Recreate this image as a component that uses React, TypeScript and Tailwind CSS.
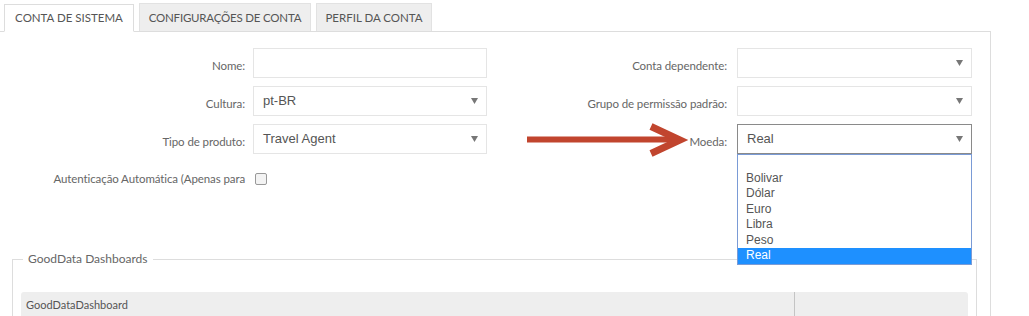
import React from 'react';

const labelFont = "font-['Lato',sans-serif]";
const inputFont = "font-['Liberation_Sans',Arial,sans-serif]";

function Caret() {
  return (
    <svg width="7" height="6" viewBox="0 0 7 6" className="shrink-0">
      <path d="M0 0 H7 L3.5 6 Z" fill="#777" />
    </svg>
  );
}

function Field({
  label,
  value,
  select,
  labelWidth,
  gap,
  width,
  active,
  children,
}: {
  label: string;
  value?: string;
  select?: boolean;
  labelWidth: string;
  gap: string;
  width: string;
  active?: boolean;
  children?: React.ReactNode;
}) {
  return (
    <div className={`flex items-center h-[30px] ${gap}`}>
      <div className={`${labelWidth} text-right text-[11.5px] tracking-[-0.1px] text-[#666] pt-[5px] ${labelFont}`}>
        {label}
      </div>
      <div className={`relative ${width} h-[30px]`}>
        <div
          className={`flex items-center justify-between h-full pl-[9px] pr-[8px] bg-white border ${
            active ? 'border-[#8a8a8a]' : 'border-[#e5e5e5]'
          } text-[13px] text-[#555] ${inputFont}`}
        >
          <span>{value}</span>
          {select && <Caret />}
        </div>
        {children}
      </div>
    </div>
  );
}

const moedas = ['', 'Bolivar', 'Dólar', 'Euro', 'Libra', 'Peso', 'Real'];

export default function App() {
  return (
    <div className="relative w-[1029px] h-[316px] overflow-hidden bg-white">
      {/* Tabs */}
      <div className={`flex items-end gap-[5px] w-[991px] h-[32px] pl-[4px] border-b border-[#ddd] ${labelFont}`}>
        <div className="w-[130px] h-[28px] flex items-center justify-center bg-white border border-[#ddd] border-b-white -mb-px text-[11.5px] text-[#555]">
          CONTA DE SISTEMA
        </div>
        <div className="w-[172px] h-[28px] flex items-center justify-center bg-[#eee] border border-[#e2e2e2] border-b-0 text-[11.5px] tracking-[-0.2px] text-[#555]">
          CONFIGURAÇÕES DE CONTA
        </div>
        <div className="w-[116px] h-[28px] flex items-center justify-center bg-[#eee] border border-[#e2e2e2] border-b-0 text-[11.5px] text-[#555]">
          PERFIL DA CONTA
        </div>
      </div>

      {/* Panel */}
      <div className="w-[991px] h-[284px] border-r border-[#ddd] pt-[16px]">
        <div className="flex">
          <div className="flex flex-col gap-[8px] w-[487px]">
            <Field label="Nome:" labelWidth="w-[245px]" gap="gap-[8px]" width="w-[234px]" />
            <Field label="Cultura:" value="pt-BR" select labelWidth="w-[245px]" gap="gap-[8px]" width="w-[234px]" />
            <Field label="Tipo de produto:" value="Travel Agent" select labelWidth="w-[245px]" gap="gap-[8px]" width="w-[234px]" />
          </div>
          <div className="flex flex-col gap-[8px]">
            <Field label="Conta dependente:" select labelWidth="w-[240px]" gap="gap-[10px]" width="w-[235px]" />
            <Field label="Grupo de permissão padrão:" select labelWidth="w-[240px]" gap="gap-[10px]" width="w-[235px]" />
            <Field label="Moeda:" value="Real" select active labelWidth="w-[240px]" gap="gap-[10px]" width="w-[235px]">
              <div className={`absolute left-0 top-full w-[235px] z-20 bg-white border border-[#7a9bd6] text-[12px] ${inputFont}`}>
                {moedas.map((m, i) => (
                  <div
                    key={i}
                    className={`h-[15.5px] leading-[15.5px] pl-[8px] ${
                      m === 'Real' ? 'bg-[#1e90ff] text-white' : 'text-[#555]'
                    }`}
                  >
                    {m}
                  </div>
                ))}
              </div>
            </Field>
          </div>
        </div>

        {/* Checkbox row */}
        <div className="flex items-center h-[18px] mt-[16px] gap-[10px]">
          <div className={`w-[245px] text-right text-[11.5px] tracking-[-0.1px] text-[#666] whitespace-nowrap ${labelFont}`}>
            Autenticação Automática (Apenas para
          </div>
          <div className="w-[12px] h-[12px] rounded-[2px] border border-[#999] bg-[#f3f3f3]" />
        </div>

        {/* GoodData Dashboards */}
        <fieldset className="mt-[62px] ml-[12px] w-[965px] h-[120px] border border-[#ddd] px-[8px]">
          <legend className={`ml-[2px] px-[5px] text-[12px] leading-[18px] text-[#666] ${labelFont}`}>
            GoodData Dashboards
          </legend>
          <div className="mt-[24px] flex h-[40px] bg-[#eee] rounded-t-[3px]">
            <div className={`w-[774px] border-r border-[#c4c4c4] pl-[5px] pt-[5px] text-[11px] text-[#555] ${labelFont}`}>
              GoodDataDashboard
            </div>
            <div className="flex-1" />
          </div>
        </fieldset>
      </div>

      {/* Annotation arrow */}
      <svg className="absolute left-0 top-0 pointer-events-none z-10" width="1029" height="316">
        <line x1="527" y1="139.5" x2="677" y2="139.5" stroke="#c1452e" strokeWidth="6" />
        <polyline
          points="651,126.5 680,140 651,153.5"
          fill="none"
          stroke="#c1452e"
          strokeWidth="7"
          strokeLinejoin="miter"
        />
      </svg>
    </div>
  );
}
